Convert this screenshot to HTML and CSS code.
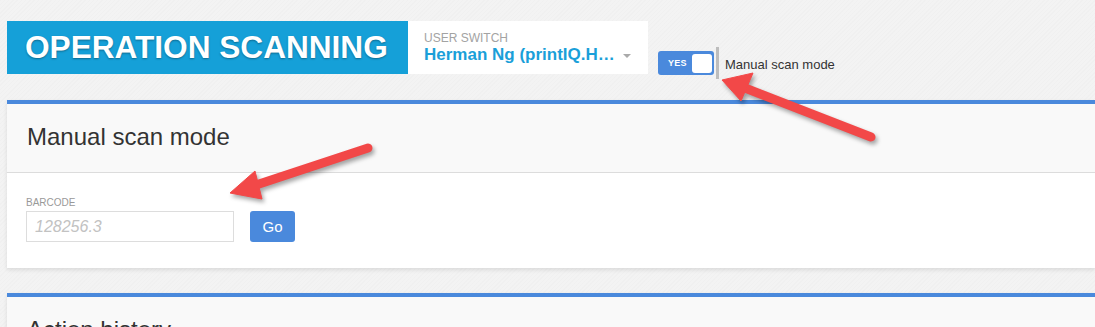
FILE: index.html
```html
<!DOCTYPE html>
<html lang="en">
  <head>
    <meta charset="UTF-8" />
    <meta name="viewport" content="width=device-width, initial-scale=1.0" />
    <title>Operation Scanning</title>
    <link rel="stylesheet" href="styles.css">
  </head>
  <body>
    <div class="topbar">
      <div class="brand">OPERATION SCANNING</div>
      <div class="user-switch">
        <div class="user-label">USER SWITCH</div>
        <div class="user-row">
          <span class="user-name">Herman Ng (printIQ.Herman)</span>
          <span class="caret"></span>
        </div>
      </div>
      <div class="mode-switch">
        <div class="toggle">
          <span class="toggle-text">YES</span>
          <span class="toggle-knob"></span>
        </div>
        <span class="mode-bar"></span>
        <span class="mode-label">Manual scan mode</span>
      </div>
    </div>

    <div class="panel">
      <div class="panel-head">
        <h2>Manual scan mode</h2>
      </div>
      <div class="panel-body">
        <label class="field-label" for="barcode">BARCODE</label>
        <div class="field-row">
          <input type="text" id="barcode" placeholder="128256.3" />
          <button class="go-btn">Go</button>
        </div>
      </div>
    </div>

    <div class="panel">
      <div class="panel-head">
        <h2>Action history</h2>
      </div>
    </div>

    <svg class="callouts" width="1095" height="327" viewBox="0 0 1095 327">
      <g fill="#f24848" stroke="#f24848">
        <line x1="871" y1="137" x2="745" y2="88" stroke-width="9" stroke-linecap="round" />
        <polygon points="722,80 753,73 741,101" stroke-width="1" stroke-linejoin="round" />
        <line x1="368" y1="148" x2="256" y2="185" stroke-width="9" stroke-linecap="round" />
        <polygon points="230,193 255,171 262,199" stroke-width="1" stroke-linejoin="round" />
      </g>
    </svg>
  </body>
</html>
```

FILE: styles.css
```css
/* styles.css */
body {
  font-family: "Liberation Sans", Arial, sans-serif;
  background-color: #f3f3f3;
  background-image: repeating-linear-gradient(135deg, rgba(0, 0, 0, 0.012) 0px, rgba(0, 0, 0, 0.012) 1px, transparent 1px, transparent 3px);
  margin: 0;
  padding: 21px 0 0 7px;
  height: 327px;
  box-sizing: border-box;
  overflow: hidden;
  position: relative;
  color: #333;
}

.topbar {
  display: flex;
  align-items: flex-start;
  height: 53px;
}

.brand {
  background: #15a0d8;
  color: white;
  font-weight: bold;
  font-size: 31.6px;
  height: 53px;
  width: 401px;
  box-sizing: border-box;
  padding-left: 18px;
  display: flex;
  align-items: center;
  text-shadow: 0 1px 2px rgba(0, 0, 0, 0.35);
  white-space: nowrap;
}

.user-switch {
  background: white;
  height: 53px;
  width: 240px;
  box-sizing: border-box;
  padding: 11px 0 0 16px;
}

.user-label {
  font-size: 12px;
  line-height: 13px;
  color: #a3a3a3;
}

.user-row {
  display: flex;
  align-items: center;
}

.user-name {
  font-size: 17px;
  font-weight: bold;
  color: #1a9fd9;
  line-height: 19px;
  max-width: 192px;
  white-space: nowrap;
  overflow: hidden;
  text-overflow: ellipsis;
}

.caret {
  margin-left: 7px;
  margin-top: 3px;
  width: 0;
  height: 0;
  border-left: 4px solid transparent;
  border-right: 4px solid transparent;
  border-top: 4px solid #aaa;
}

.mode-switch {
  display: flex;
  align-items: center;
  margin: 26px 0 0 10px;
}

.toggle {
  width: 56px;
  height: 24px;
  box-sizing: border-box;
  background: #4a89dc;
  border-radius: 3px;
  display: flex;
  align-items: center;
  padding: 0 2px 0 10px;
}

.toggle-text {
  color: white;
  font-size: 9px;
  font-weight: bold;
  letter-spacing: 0.3px;
  flex: 1;
}

.toggle-knob {
  width: 20px;
  height: 19px;
  background: white;
  border-radius: 3px;
}

.mode-bar {
  width: 3px;
  height: 32px;
  background: #bdbdbd;
  margin: 0 6px 0 2px;
}

.mode-label {
  font-size: 13px;
  color: #333;
  padding-top: 2px;
}

.panel {
  margin-top: 26px;
  background: white;
  border-top: 4px solid #4a89dc;
  box-shadow: 0 2px 4px rgba(0, 0, 0, 0.1);
}

.panel + .panel {
  margin-top: 25px;
}

.panel-head {
  background: #f9f9f9;
  border-bottom: 1px solid #dcdcdc;
  padding: 20px 20px 22px 20px;
}

.panel-head h2 {
  margin: 0;
  font-size: 24px;
  font-weight: normal;
  line-height: 26px;
  color: #333;
}

.panel-body {
  padding: 24px 20px 26px 19px;
}

.field-label {
  display: block;
  font-size: 10px;
  line-height: 12px;
  color: #999;
  margin-bottom: 2px;
}

.field-row {
  display: flex;
  gap: 16px;
}

input[type="text"] {
  width: 208px;
  height: 31px;
  box-sizing: border-box;
  border: 1px solid #ddd;
  padding: 0 8px;
  font-family: inherit;
  font-size: 16px;
  outline: none;
}

input[type="text"]::placeholder {
  color: #c2c2c2;
  font-style: italic;
}

.go-btn {
  width: 45px;
  height: 31px;
  border: none;
  border-radius: 3px;
  background-color: #4a89dc;
  color: white;
  font-family: inherit;
  font-size: 15px;
  cursor: pointer;
}

.callouts {
  position: absolute;
  left: 0;
  top: 0;
  pointer-events: none;
  filter: drop-shadow(2px 3px 2px rgba(0, 0, 0, 0.35));
}
```
